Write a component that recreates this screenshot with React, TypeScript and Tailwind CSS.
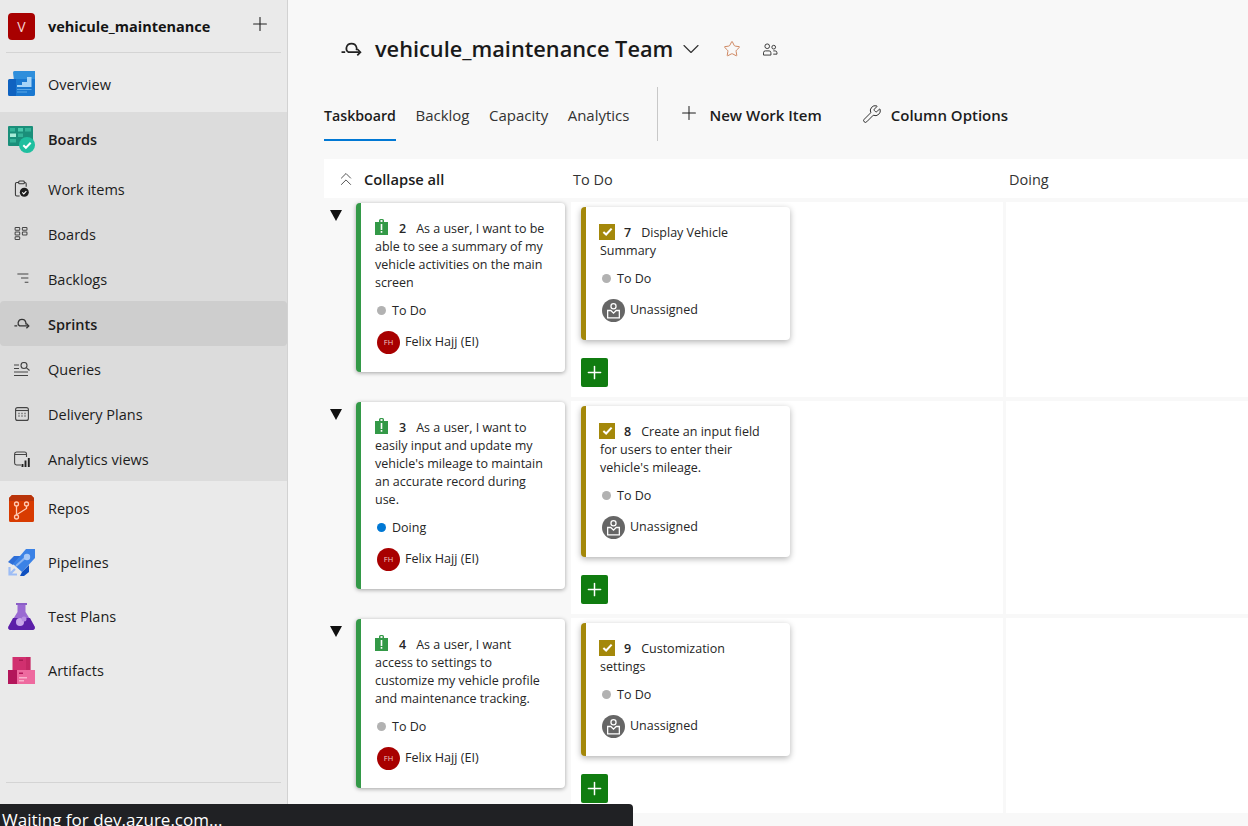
import { ReactNode } from 'react';
import { Plus, ChevronDown, Star, Wrench, ChevronsUp } from 'lucide-react';

const SprintIcon = ({ className }: { className?: string }) => (
  <svg viewBox="0 0 20 13" className={className} fill="none" stroke="currentColor" strokeWidth="1.600">
    <path d="M0.500 9.500h3.500M17.500 9.500H7C5.400 8.500 4.800 6.800 5.200 5 5.800 2.800 7.700 1.400 10 1.400s4.200 1.400 4.800 3.600c.2 1 .2 1.800-.1 2.700" />
    <path d="M15.500 6.500l3 3-3 3" />
  </svg>
);

const OverviewLogo = () => (
  <svg viewBox="0 0 27 25" className="h-[25px] w-[27px]">
    <path d="M5 1.500A1.500 1.500 0 016.500 0H27v23a2 2 0 01-2 2H8z" fill="#2f8fdc" />
    <path d="M0 9.500A1.500 1.500 0 011.500 8H12v17H1.500A1.500 1.500 0 010 23.500z" fill="#0f62c0" />
    <path d="M8 8h19v15a2 2 0 01-2 2H8z" fill="#1a78d0" />
    <path d="M9 14h5v-3h5V6h4.500v10H9z" fill="#a6d4f7" />
    <path d="M9 18h14.500v1H9zM9 20.500h10v1H9z" fill="#5aa7e6" />
  </svg>
);

const BoardsLogo = () => (
  <svg viewBox="0 0 27 27" className="h-[27px] w-[27px]">
    <rect x="0" y="0" width="25" height="20" rx="1" fill="#1a8f7a" />
    <rect x="2" y="2" width="5" height="3.500" fill="#34b398" />
    <rect x="10" y="2" width="5" height="3.500" fill="#4cc9ad" />
    <rect x="17" y="2" width="6" height="3.500" fill="#34b398" />
    <rect x="2" y="7.500" width="6" height="3.500" fill="#a8ecd8" />
    <rect x="10" y="7.500" width="5" height="3.500" fill="#34b398" />
    <rect x="2" y="13" width="6" height="3.500" fill="#34b398" />
    <circle cx="19" cy="19" r="8" fill="#1fbf9f" />
    <path d="M15.300 19.200l2.600 2.600 4.800-5" fill="none" stroke="#fff" strokeWidth="2" />
  </svg>
);

const ReposLogo = () => (
  <svg viewBox="0 0 25 27" className="h-[27px] w-[25px]">
    <path d="M3 0h19l3 3v22.500a1.500 1.500 0 01-1.500 1.500h-22A1.500 1.500 0 010 25.500V3z" fill="#d83b01" />
    <path d="M3 0h19l3 3v3H0V3z" fill="#b9340a" />
    <g fill="none" stroke="#ffc9b3" strokeWidth="1.300">
      <circle cx="7.500" cy="9" r="2" />
      <circle cx="17.500" cy="9" r="2" />
      <circle cx="7.500" cy="22" r="2" />
      <path d="M7.500 11v9M17.500 11v2.500l-9.500 6" />
    </g>
  </svg>
);

const PipelinesLogo = () => (
  <svg viewBox="0 0 27 27" className="h-[27px] w-[27px]">
    <path d="M0 13l6-6h7l-8 9z" fill="#2e6fd8" />
    <path d="M18 0h9v9L14 23l-9-8z" fill="#3b82e6" />
    <path d="M14 23l7-7v7l-5 4h-4z" fill="#0f50c0" />
    <path d="M8 17l10-9" stroke="#8ab4f0" strokeWidth="2" fill="none" />
    <circle cx="19" cy="8" r="3.200" fill="#a6c8f7" />
    <path d="M1.500 18v7.500H9M2 25l5-5" stroke="#9dbdf5" strokeWidth="2.200" fill="none" />
  </svg>
);

const TestPlansLogo = () => (
  <svg viewBox="0 0 27 27" className="h-[27px] w-[27px]">
    <rect x="8" y="0" width="11" height="2" fill="#8b5fc7" />
    <path d="M9.500 2h8v7l9 14.500c.8 1.700-.2 3.500-2 3.500H2.500c-1.800 0-2.800-1.800-2-3.500l9-14.500z" fill="#9a6ad2" />
    <path d="M5 15h17l4.600 8.500c.8 1.700-.2 3.500-2 3.500H2.500c-1.800 0-2.800-1.800-2-3.500z" fill="#5c1fa8" />
    <circle cx="12" cy="19" r="4" fill="#c9a8ea" />
    <circle cx="16" cy="16" r="2.500" fill="#b78fe2" />
  </svg>
);

const ArtifactsLogo = () => (
  <svg viewBox="0 0 27 27" className="h-[27px] w-[27px]">
    <rect x="4.500" y="0" width="18" height="14" fill="#d1306f" />
    <rect x="18" y="0" width="4.500" height="14" fill="#b81f5a" opacity="0.5" />
    <rect x="0" y="13" width="13" height="14" fill="#b3165a" />
    <rect x="9" y="13" width="18" height="14" fill="#ee6a9f" />
    <rect x="11" y="15.500" width="4" height="1.500" fill="#b3165a" />
    <rect x="11" y="20" width="8" height="1.500" fill="#f9b0cc" />
    <rect x="11" y="23" width="5" height="1.500" fill="#f9b0cc" />
    <rect x="11" y="2.500" width="4" height="1.500" fill="#a81a52" />
  </svg>
);

const WorkItemsIcon = () => (
  <svg viewBox="0 0 16 18" className="h-[17px] w-[15px]" fill="none" stroke="#333" strokeWidth="1.100">
    <path d="M5 2.500H3A1.500 1.500 0 001.500 4v11.500A1.500 1.500 0 003 17h3M11 2.500h.5A1.500 1.500 0 0113 4v3" />
    <rect x="5" y="1" width="6" height="3" rx="1" />
    <circle cx="11" cy="13" r="4.800" fill="#1f1f1f" stroke="none" />
    <path d="M8.800 13.200l1.600 1.500 2.800-3" stroke="#fff" strokeWidth="1.200" />
  </svg>
);

const BoardsIcon = () => (
  <svg viewBox="0 0 15 14" className="h-[13px] w-[15px]" fill="none" stroke="#444" strokeWidth="1.100">
    <rect x="0.600" y="0.600" width="5" height="3" rx="0.800" />
    <rect x="0.600" y="5.500" width="5" height="3" rx="0.800" />
    <rect x="0.600" y="10.400" width="5" height="3" rx="0.800" />
    <rect x="8.400" y="0.600" width="5" height="3" rx="0.800" />
    <rect x="8.400" y="5.500" width="5" height="3" rx="0.800" />
  </svg>
);

const BacklogsIcon = () => (
  <svg viewBox="0 0 15 12" className="h-[11px] w-[15px]" fill="none" stroke="#444" strokeWidth="1.100">
    <path d="M3 1h12M7 5.500h8M11 10h4" />
  </svg>
);

const QueriesIcon = () => (
  <svg viewBox="0 0 16 14" className="h-[14px] w-[16px]" fill="none" stroke="#444" strokeWidth="1.100">
    <path d="M0 3h5M0 6.500h5M0 10h14M0 13.500h14" />
    <circle cx="10" cy="3.500" r="3" />
    <path d="M12.300 5.700l3.200 2.800" />
  </svg>
);

const DeliveryIcon = () => (
  <svg viewBox="0 0 14 14" className="h-[14px] w-[14px]" fill="none" stroke="#444" strokeWidth="1.100">
    <rect x="0.600" y="0.600" width="12.800" height="12.800" rx="2" />
    <path d="M0.600 3.500h12.800" />
    <path d="M3.500 6.500h1M6.500 6.500h1M9.500 6.500h1M3.500 9h1M6.500 9h1M9.500 9h1" strokeWidth="1.300" />
  </svg>
);

const AnalyticsIcon = () => (
  <svg viewBox="0 0 16 16" className="h-[16px] w-[16px]" fill="none" stroke="#444" strokeWidth="1.100">
    <path d="M7 14H2.500A2 2 0 01.600 12V3A2 2 0 012.500 1h8A2 2 0 0112.500 3v3M.600 3.500h12" />
    <path d="M8.500 16v-3M11.500 16V9.500M14.800 16V7" stroke="#222" strokeWidth="1.900" />
  </svg>
);

const NavHub = ({ icon, label, h, selected }: { icon: ReactNode; label: string; h: string; selected?: boolean }) => (
  <div className={`flex items-center ${h}`}>
    <div className="flex w-[48px] shrink-0 justify-center pr-[5px]">{icon}</div>
    <span className={`pt-[2px] text-[14.500px] text-[#1c1c1c] ${selected ? 'font-semibold' : ''}`}>{label}</span>
  </div>
);

const SubItem = ({ icon, label, active, h = 'h-[45px]' }: { icon: ReactNode; label: string; active?: boolean; h?: string }) => (
  <div className={`flex items-center ${h} ${active ? 'rounded-sm bg-[#cecece]' : ''}`}>
    <div className="flex w-[48px] shrink-0 justify-center pr-[5px] text-[#333]">{icon}</div>
    <span className={`pt-[2px] text-[14.500px] text-[#1c1c1c] ${active ? 'font-semibold' : ''}`}>{label}</span>
  </div>
);

const Sidebar = () => (
  <aside className="flex h-screen w-[288px] shrink-0 flex-col border-r border-[#d2d2d2] bg-[#eaeaea]">
    <div className="mx-[6px] flex h-[53px] shrink-0 items-center border-b border-[#d4d4d4] pr-[10px]">
      <div className="ml-[2px] flex h-[27px] w-[27px] items-center justify-center rounded-[4px] bg-[#a80000] text-[14px] text-[#f5d0d0]">V</div>
      <span className="ml-[13px] flex-1 pt-[1px] text-[14.500px] font-bold text-[#141414]">vehicule_maintenance</span>
      <Plus size={22} strokeWidth={1.200} className="mb-[5px] text-[#222]" />
    </div>
    <NavHub icon={<OverviewLogo />} label="Overview" h="h-[59px] pt-[2px]" />
    <div className="bg-[#dcdcdc]">
      <NavHub icon={<BoardsLogo />} label="Boards" h="h-[54px]" selected />
      <SubItem icon={<WorkItemsIcon />} label="Work items" h="h-[45px]" />
      <SubItem icon={<BoardsIcon />} label="Boards" />
      <SubItem icon={<BacklogsIcon />} label="Backlogs" />
      <SubItem icon={<SprintIcon className="h-[11px] w-[16px]" />} label="Sprints" active />
      <SubItem icon={<QueriesIcon />} label="Queries" />
      <SubItem icon={<DeliveryIcon />} label="Delivery Plans" />
      <SubItem icon={<AnalyticsIcon />} label="Analytics views" />
    </div>
    <NavHub icon={<ReposLogo />} label="Repos" h="h-[54px]" />
    <NavHub icon={<PipelinesLogo />} label="Pipelines" h="h-[54px]" />
    <NavHub icon={<TestPlansLogo />} label="Test Plans" h="h-[54px]" />
    <NavHub icon={<ArtifactsLogo />} label="Artifacts" h="h-[54px]" />
    <div className="flex-1" />
    <div className="mx-[6px] mb-[43px] border-t border-[#d4d4d4]" />
  </aside>
);

const StoryIcon = () => (
  <svg viewBox="0 0 13 16" className="inline-block h-[16px] w-[13px] align-[-2px]">
    <path d="M0 3h4V1.500A1.500 1.500 0 015.500 0h2A1.500 1.500 0 019 1.500V3h4v13H0z" fill="#339947" />
    <rect x="5.500" y="1" width="2" height="2" fill="#f2f2f2" />
    <path d="M5.700 5h1.600v6H5.700zM5.700 12h1.600v1.800H5.700z" fill="#fff" />
  </svg>
);

const TaskIcon = () => (
  <span className="-ml-[1px] inline-flex h-4 w-4 -translate-y-[2px] items-center justify-center bg-[#a4880a] align-[-2px]">
    <svg viewBox="0 0 12 12" className="h-[11px] w-[11px]" fill="none" stroke="#fff" strokeWidth="2.200">
      <path d="M1.500 6.500l3 2.800 6-6.500" />
    </svg>
  </span>
);

const UnassignedAvatar = () => (
  <span className="ml-[2px] flex h-[23px] w-[23px] shrink-0 items-center justify-center rounded-full bg-[#666]">
    <svg viewBox="0 0 16 16" className="h-[17px] w-[17px]" fill="none" stroke="#fff" strokeWidth="1.200">
      <circle cx="8" cy="4" r="2.400" />
      <path d="M2.500 15V8h3l2.500 2.500L10.500 8h3v7z" />
    </svg>
  </span>
);

const InitialsAvatar = () => (
  <span className="ml-[2px] flex h-[23px] w-[23px] shrink-0 items-center justify-center rounded-full bg-[#a80000] text-[7.500px] text-[#f0c4c4]">FH</span>
);

const Status = ({ label, dot }: { label: string; dot: string }) => (
  <div className="flex h-[18px] items-center text-[12.500px] text-[#262626]">
    <span className={`ml-[2px] mr-[6px] mb-[2px] h-[9px] w-[9px] rounded-full ${dot}`} />
    {label}
  </div>
);

type StoryProps = { id: number; title: string; status: string; dot: string; h: string };

const StoryCard = ({ id, title, status, dot, h }: StoryProps) => (
  <div className={`w-[209px] ${h} rounded-[4px] border-l-[5px] border-[#339947] bg-white pl-[14px] pr-[17px] pt-[16px] shadow-[0_1px_4px_rgba(0,0,0,0.35)]`}>
    <div className="text-[12.500px] leading-[18px] text-[#262626]">
      <StoryIcon />
      <span className="ml-[11px] mr-[10px] font-semibold">{id}</span>
      {title}
    </div>
    <div className="mt-[10px]">
      <Status label={status} dot={dot} />
    </div>
    <div className="mt-[11px] flex items-center gap-[5px] text-[12.600px] text-[#262626]">
      <InitialsAvatar />
      Felix Hajj (EI)
    </div>
  </div>
);

type TaskProps = { id: number; title: string; h: string };

const TaskCard = ({ id, title, h }: TaskProps) => (
  <div className={`w-[209px] ${h} rounded-[4px] border-l-[5px] border-[#a4880a] bg-white pl-[14px] pr-[22px] pt-[17px] shadow-[0_2px_6px_rgba(0,0,0,0.3)]`}>
    <div className="text-[12.500px] leading-[18px] text-[#262626]">
      <TaskIcon />
      <span className="ml-[9px] mr-[10px] font-semibold">{id}</span>
      {title}
    </div>
    <div className="mt-[10px]">
      <Status label="To Do" dot="bg-[#b2b2b2]" />
    </div>
    <div className="mt-[11px] flex items-center gap-[5px] text-[12.500px] text-[#262626]">
      <UnassignedAvatar />
      Unassigned
    </div>
  </div>
);

const AddButton = () => (
  <button className="flex h-[29px] w-[27px] items-center justify-center rounded-[2px] bg-[#107c10] text-white">
    <Plus size={21} strokeWidth={1.700} />
  </button>
);

type RowProps = { story: StoryProps; task: TaskProps; h: string };

const Row = ({ story, task, h }: RowProps) => (
  <div className={`flex ${h}`}>
    <div className="flex w-[247px] shrink-0 items-start">
      <div className="mt-[8px] flex w-[24px] justify-center">
        <span className="h-0 w-0 border-x-[6.500px] border-t-[11px] border-x-transparent border-t-[#111]" />
      </div>
      <div className="ml-[8px] mt-[1px]">
        <StoryCard {...story} />
      </div>
    </div>
    <div className="w-[432px] shrink-0 bg-white pl-[10px] pt-[5px]">
      <TaskCard {...task} />
      <div className="mt-[18px]">
        <AddButton />
      </div>
    </div>
    <div className="ml-[3px] flex-1 bg-white" />
  </div>
);

const rows: RowProps[] = [
  {
    h: 'h-[195px]',
    story: { id: 2, title: 'As a user, I want to be able to see a summary of my vehicle activities on the main screen', status: 'To Do', dot: 'bg-[#b2b2b2]', h: 'h-[169px]' },
    task: { id: 7, title: 'Display Vehicle Summary', h: 'h-[133px]' },
  },
  {
    h: 'h-[213px]',
    story: { id: 3, title: "As a user, I want to easily input and update my vehicle's mileage to maintain an accurate record during use.", status: 'Doing', dot: 'bg-[#0078d4]', h: 'h-[187px]' },
    task: { id: 8, title: "Create an input field for users to enter their vehicle's mileage.", h: 'h-[151px]' },
  },
  {
    h: 'h-[195px]',
    story: { id: 4, title: 'As a user, I want access to settings to customize my vehicle profile and maintenance tracking.', status: 'To Do', dot: 'bg-[#b2b2b2]', h: 'h-[169px]' },
    task: { id: 9, title: 'Customization settings', h: 'h-[133px]' },
  },
];

const App = () => (
  <div className="relative flex h-screen overflow-hidden bg-[#f8f8f8] font-['Open_Sans','Noto_Sans',sans-serif]">
    <Sidebar />
    <main className="min-w-0 flex-1 pl-[36px]">
      <div className="flex h-[87px] items-center pl-[17px] pt-[11px]">
        <SprintIcon className="h-[14px] w-[21px] text-[#222]" />
        <h1 className="ml-[13px] text-[21.750px] font-semibold text-[#1a1a1a]">vehicule_maintenance Team</h1>
        <ChevronDown size={28} strokeWidth={1} className="ml-[4px] text-[#333]" />
        <Star size={18} strokeWidth={1.200} className="ml-[18px] text-[#c97a50]" />
        <svg viewBox="0 0 16 14" className="ml-[21px] h-[13px] w-[16px]" fill="none" stroke="#333" strokeWidth="1">
          <circle cx="5" cy="3.500" r="2.500" />
          <path d="M1 13V10.500A2 2 0 013 8.500h4a2 2 0 012 2V13z" />
          <circle cx="12" cy="4.500" r="2" />
          <path d="M11.500 8.500h2a2 2 0 012 2V12h-4" />
        </svg>
      </div>
      <div className="flex h-[55px] items-start">
        <div className="flex h-[54px] items-center gap-[19.500px] pt-[3px] text-[15px] text-[#333]">
          <div className="relative flex h-full items-center text-[14.200px] font-semibold text-[#1c1c1c]">
            Taskboard
            <span className="absolute inset-x-0 bottom-[0px] h-[2px] bg-[#0078d4]" />
          </div>
          <span>Backlog</span>
          <span>Capacity</span>
          <span>Analytics</span>
        </div>
        <div className="ml-[28px] h-[54px] w-px bg-[#c8c8c8]" />
        <div className="flex h-[54px] items-center pt-[3px] text-[15px] font-semibold text-[#1c1c1c]">
          <Plus size={22} strokeWidth={1.100} className="mb-[5px] ml-[20px]" />
          <span className="ml-[9px]">New Work Item</span>
          <Wrench size={20} strokeWidth={1.100} className="mb-[3px] ml-[40px]" />
          <span className="ml-[9px]">Column Options</span>
        </div>
      </div>
      <div className="pt-[17px]">
        <div className="flex h-[39px] items-center bg-white pt-[2px] text-[14.500px]">
          <div className="flex w-[247px] shrink-0 items-center pl-[11px] text-[14.700px] font-semibold text-[#1c1c1c]">
            <ChevronsUp size={22} strokeWidth={1} className="mb-[2px] text-[#444]" />
            <span className="ml-[7px]">Collapse all</span>
          </div>
          <span className="ml-[2px] w-[436px] shrink-0 text-[#333]">To Do</span>
          <span className="text-[#333]">Doing</span>
        </div>
        <div className="mt-[4px] flex flex-col gap-[4px]">
          {rows.map(r => (
            <Row key={r.story.id} {...r} />
          ))}
        </div>
      </div>
    </main>
    <div className="absolute bottom-0 left-0 h-[22px] w-[633px] overflow-hidden rounded-tr-[4px] bg-[#202124] pl-[2px] text-[17px] leading-[32px] text-white">
      Waiting for dev.azure.com...
    </div>
  </div>
);

export default App;
